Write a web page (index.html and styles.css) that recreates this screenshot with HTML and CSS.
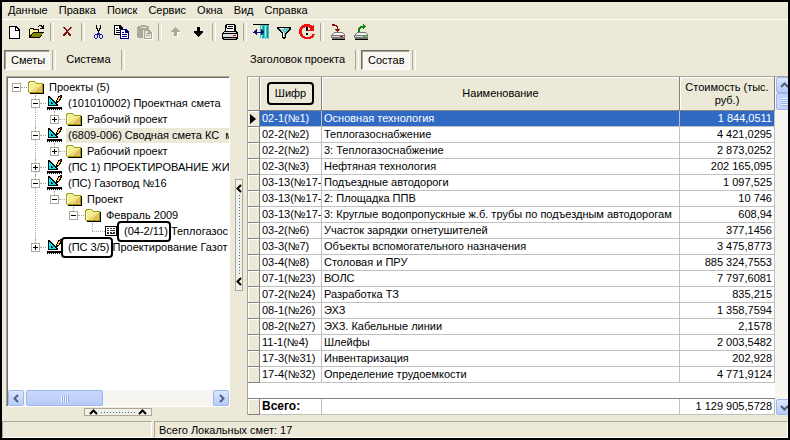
FILE: index.html
```
<!DOCTYPE html>
<html lang="ru">
  <head>
    <meta charset="utf-8" />
    <title>Проекты</title>
    <link rel="stylesheet" href="styles.css">
  </head>
  <body>
    <svg class="defs" width="0" height="0" aria-hidden="true">
      <symbol id="folder" viewBox="0 0 16 16">
        <path d="M2 15h14V5h-1v9H2z" fill="#000" />
        <path d="M0 4l1-2h5l2 2h6l1 1v9H1l-1-1z" fill="#9c9c00" />
        <path d="M1 4l1-1h4l2 2h6v8H1z" fill="#f4ee90" />
        <path d="M1 4h1v8H1zM2 3h4v1H2z" fill="#fffff0" />
        <path d="M6 13l8-7v7z" fill="#e0bd5c" />
        <path d="M3 12l9-6h1l-8 7H3z" fill="#ead578" />
      </symbol>
      <symbol id="project" viewBox="0 0 16 16">
        <path d="M1 1h1l9 9v1H1z" fill="#000" />
        <path d="M2 3l7 7H2z" fill="#00e8f0" />
        <path d="M4 7h1v1h1v1H4z" fill="#000" />
        <path d="M0 12h15v3H0z" fill="#000" />
        <path d="M1 14h1v1H1zM3 14h1v1H3zM5 14h1v1H5zM7 14h1v1H7zM9 14h1v1H9zM11 14h1v1h-1zM13 14h1v1h-1z" fill="#fff" />
        <path d="M8 7h1V5h1V3h1V1h2V0h2v3h-1v2h-1v1h-1v1h-1v1H8z" fill="#000" />
        <path d="M10 5h1V3h1V2h1v2h-1v2h-2z" fill="#ffe600" />
        <path d="M13 1h1v1h-1z" fill="#d00000" />
      </symbol>
      <symbol id="sheet" viewBox="0 0 12 12">
        <path d="M0 1h12v10H0z" fill="#000" />
        <path d="M1 2h10v8H1z" fill="#fff" />
        <path d="M2 3h2v1H2zM5 3h2v1H5zM8 3h2v1H8zM2 5h2v1H2zM5 5h5v1H5zM2 7h2v1H2zM5 7h2v1H5zM8 7h2v1H8zM2 9h2V8H2zM5 9h5V8H5z" fill="#333" />
      </symbol>
      <symbol id="drive" viewBox="0 0 16 16">
        <path d="M4 8h9l2 3v3l-1 1H2l-1-1v-3z" fill="#777" />
        <path d="M4 9h8l2 2H2z" fill="#f4f4f4" />
        <path d="M2 12h12v1H2z" fill="#d8d8d8" />
        <path d="M2 15h12l1-1v1l-1 1H2z" fill="#000" />
      </symbol>
    </svg>

    <div class="app">
      <nav class="menu">
        <button type="button">Данные</button>
        <button type="button">Правка</button>
        <button type="button">Поиск</button>
        <button type="button">Сервис</button>
        <button type="button">Окна</button>
        <button type="button">Вид</button>
        <button type="button">Справка</button>
      </nav>

      <div class="toolbar">
        <button type="button" aria-label="Создать">
          <svg viewBox="0 0 16 16">
            <path d="M3 2h7l4 4v9H3z" fill="#000" />
            <path d="M4 3h5v4h4v7H4z" fill="#fff" />
            <path d="M10 4l2 2h-2z" fill="#fff" />
          </svg>
        </button>
        <button type="button" aria-label="Открыть">
          <svg viewBox="0 0 16 16">
            <path d="M0 5l1-1h3l1 1h5v3h5l-4 6H0z" fill="#000" />
            <path d="M1 5h3v1h5v2H4L1 12z" fill="#fff28c" />
            <path d="M4 9h10l-3 4H2z" fill="#848400" />
            <path d="M9 2h1V1h3v1h1V1h1v4h-4V4h2V3h-1V2h-2v1H9z" fill="#000" />
          </svg>
        </button>
        <span class="sep"></span>
        <button type="button" aria-label="Удалить">
          <svg viewBox="0 0 16 16">
            <path d="M3 3h2l1 2 1 1 2-2 1-1h2v1h-1L8 7l1 2 1 1h1v2H9L8 10 7 9l-2 2v1H3v-2l1-1 2-2-1-1-2-2z" fill="#7c1010" />
          </svg>
        </button>
        <span class="sep"></span>
        <button type="button" aria-label="Вырезать">
          <svg viewBox="0 0 16 16">
            <path d="M5 1h1v3h1v2h1V4h1V1h1v4H9v2H8v2H7V7H6V5H5z" fill="#000" />
            <path d="M7 8h1v1h1v1h2v1h1v3h-1v1H9v-1H8v-3H7v3H6v1H4v-1H3v-3h1v-1h2V9h1zM4 11v3h2v-3zM9 11v3h2v-3z" fill="#1a1a9c" fill-rule="evenodd" />
          </svg>
        </button>
        <button type="button" aria-label="Копировать">
          <svg viewBox="0 0 16 16">
            <path d="M0 1h6l3 3v7H0z" fill="#000" />
            <path d="M1 2h4v3h3v5H1z" fill="#fff" />
            <path d="M2 4h2v1H2zM2 6h4v1H2zM2 8h4v1H2z" fill="#000" />
            <path d="M6 5h6l3 3v7H6z" fill="#00007c" />
            <path d="M7 6h4v3h3v5H7z" fill="#fff" />
            <path d="M8 8h2v1H8zM8 10h5v1H8zM8 12h5v1H8z" fill="#00007c" />
          </svg>
        </button>
        <button type="button" aria-label="Вставить" disabled>
          <svg viewBox="0 0 16 16">
            <path d="M1 2h3V1h5v1h3v4H6v8H1L0 13V3z" fill="#aca899" />
            <path d="M4 3h5v1H4z" fill="#ece9d8" />
            <path d="M7 7h6l3 3v6H7z" fill="#fff" />
            <path d="M7 6h5l3 3v6H7z" fill="#aca899" />
            <path d="M8 7h3v3h3v4H8z" fill="#ece9d8" />
            <path d="M9 9h2v1H9zM9 11h4v1H9z" fill="#aca899" />
          </svg>
        </button>
        <span class="sep"></span>
        <button type="button" aria-label="Вверх" disabled>
          <svg viewBox="0 0 16 16">
            <path d="M8 4h1v1h1v1h1v1h1v1h1v1h-3v4H7V9z" fill="#fff" />
            <path d="M7 3h1v1h1v1h1v1h1v1h1v1H9v4H6V8H3V7h1V6h1V5h1V4h1z" fill="#aca899" />
          </svg>
        </button>
        <button type="button" aria-label="Вниз">
          <svg viewBox="0 0 16 16">
            <path d="M6 3h3v4h3v2h-1v1h-1v1H9v1H8v1H7v-1H6v-1H5v-1H4V9H3V7h3z" fill="#000" />
          </svg>
        </button>
        <span class="sep"></span>
        <button type="button" aria-label="Печать">
          <svg viewBox="0 0 16 16">
            <path d="M4 0h9v1h1v6h1l1 2v5l-1 2H1l-1-2V9l2-2h1V3z" fill="#000" />
            <path d="M5 1h7v6H4z" fill="#fff" />
            <path d="M6 2h5v1H6zM5 4h6v1H5z" fill="#000" />
            <path d="M2 8h12v1H2zM1 10h14v3H1z" fill="#ddd" />
            <path d="M11 11h3v1h-3z" fill="#e00000" />
            <path d="M2 14h12v1H2z" fill="#aaa" />
          </svg>
        </button>
        <span class="sep"></span>
        <button type="button" aria-label="Столбцы">
          <svg viewBox="0 0 16 16">
            <path d="M0 0h16v1H0z" fill="#000" />
            <path d="M7 1h9v13l-1 1-1-1-2 1-1-1-2 1-1-1H7z" fill="#37c4c4" />
            <path d="M8 2h1v12H8zM12 2h1v11h-1z" fill="#a8f4f0" />
            <path d="M10 2h1v12h-1zM14 2h1v12h-1z" fill="#168484" />
            <path d="M0 8h1V7h1V6h1V5h1v3h4V5h1v1h1v1h1v2h-1v1H9v1H8V9H4v2H3v-1H2V9H0z" fill="#10107c" />
          </svg>
        </button>
        <button type="button" aria-label="Фильтр">
          <svg viewBox="0 0 16 16">
            <path d="M1 3h14v2l-5 5v4H9v1H7v-1H6v-4L1 5z" fill="#000" />
            <path d="M3 4h10v1L9 9v4H7V9L3 5z" fill="#63c8c8" />
            <path d="M4 4h4v1H5l3 4v4H7V9z" fill="#fff" />
          </svg>
        </button>
        <button type="button" aria-label="Обновить">
          <svg viewBox="0 0 16 16">
            <path d="M5 0h6v1h2v1h1V1h1v6H9V6h2V4h-1V3H6v1H4v1H3v5h1v2h2v1h5v-1h2v-2h3v1h-1v2h-1v1h-2v1H5v-1H3v-1H2v-1H1v-2H0V5h1V3h1V2h1V1h2z" fill="#f01010" />
            <path d="M7 3h2v4H7zM7 9h2v2H7z" fill="#000" />
          </svg>
        </button>
        <span class="sep"></span>
        <button type="button" aria-label="Загрузить">
          <svg viewBox="0 0 16 16">
            <use href="#drive" />
            <path d="M2 0h3v1h2v1h1v3h2v1H9v1H8v1H7V7H6V6H5V5h2V3H6V2H2z" fill="#8c1010" />
            <path d="M10 12h3v1h-3z" fill="#e00000" />
          </svg>
        </button>
        <button type="button" aria-label="Выгрузить">
          <svg viewBox="0 0 16 16">
            <use href="#drive" />
            <path d="M5 8V4h1V3h1V2h3V0h1v1h1v1h1v1h-1v1h-1v1h-1V4H8v1H7v3z" fill="#108410" />
            <path d="M10 12h3v1h-3z" fill="#10e010" />
          </svg>
        </button>
      </div>

      <main class="work">
        <section class="side">
          <div class="tabs">
            <button type="button" class="tab active">Сметы</button>
            <span class="sep"></span>
            <button type="button" class="tab">Система</button>
            <span class="sep"></span>
          </div>
          <div class="tree">
            <ul class="nodes">
              <li>
                <div class="node"><button type="button" class="toggle open" aria-label="Свернуть"></button><svg class="icon"><use href="#folder" /></svg><span class="label">Проекты (5)</span></div>
                <ul>
                  <li>
                    <div class="node"><button type="button" class="toggle open" aria-label="Свернуть"></button><svg class="icon"><use href="#project" /></svg><span class="label">(101010002) Проектная смета</span></div>
                    <ul>
                      <li><div class="node"><button type="button" class="toggle" aria-label="Развернуть"></button><svg class="icon"><use href="#folder" /></svg><span class="label">Рабочий проект</span></div></li>
                    </ul>
                  </li>
                  <li>
                    <div class="node"><button type="button" class="toggle open" aria-label="Свернуть"></button><svg class="icon"><use href="#project" /></svg><span class="label current">(6809-006) Сводная смета КС&nbsp; м</span></div>
                    <ul>
                      <li><div class="node"><button type="button" class="toggle" aria-label="Развернуть"></button><svg class="icon"><use href="#folder" /></svg><span class="label">Рабочий проект</span></div></li>
                    </ul>
                  </li>
                  <li>
                    <div class="node"><button type="button" class="toggle" aria-label="Развернуть"></button><svg class="icon"><use href="#project" /></svg><span class="label">(ПС 1) ПРОЕКТИРОВАНИЕ ЖИЛ</span></div>
                  </li>
                  <li>
                    <div class="node"><button type="button" class="toggle open" aria-label="Свернуть"></button><svg class="icon"><use href="#project" /></svg><span class="label">(ПС) Газотвод №16</span></div>
                    <ul>
                      <li>
                        <div class="node"><button type="button" class="toggle open" aria-label="Свернуть"></button><svg class="icon"><use href="#folder" /></svg><span class="label">Проект</span></div>
                        <ul>
                          <li>
                            <div class="node"><button type="button" class="toggle open" aria-label="Свернуть"></button><svg class="icon"><use href="#folder" /></svg><span class="label">Февраль 2009</span></div>
                            <ul>
                              <li><div class="node leaf"><svg class="icon small"><use href="#sheet" /></svg><span class="label"><span class="mark">(04-2/11)</span> Теплогазос</span></div></li>
                            </ul>
                          </li>
                        </ul>
                      </li>
                    </ul>
                  </li>
                  <li>
                    <div class="node"><button type="button" class="toggle" aria-label="Развернуть"></button><svg class="icon"><use href="#project" /></svg><span class="label"><span class="mark">(ПС 3/5)</span> Проектирование Газот</span></div>
                  </li>
                </ul>
              </li>
            </ul>
            <div class="hscroll">
              <button type="button" class="arrow" aria-label="Влево"><svg viewBox="0 0 9 9"><path d="M6 1L2.500 4.500 6 8" /></svg></button>
              <span class="thumb"></span>
              <button type="button" class="arrow" aria-label="Вправо"><svg viewBox="0 0 9 9"><path d="M3 1l3.500 3.500L3 8" /></svg></button>
            </div>
          </div>
          <div class="split-h">
            <svg viewBox="0 0 7 4"><path d="M0 4l3.500-3.500L7 4" /></svg>
            <span class="dots"></span>
            <svg viewBox="0 0 7 4"><path d="M0 4l3.500-3.500L7 4" /></svg>
          </div>
        </section>

        <div class="split-v">
          <svg viewBox="0 0 4 7"><path d="M4 0L.5 3.500 4 7" /></svg>
          <span class="dots"></span>
          <svg viewBox="0 0 4 7"><path d="M4 0L.5 3.500 4 7" /></svg>
        </div>

        <section class="content">
          <div class="tabs">
            <button type="button" class="tab">Заголовок проекта</button>
            <span class="sep"></span>
            <button type="button" class="tab active">Состав</button>
            <span class="sep"></span>
          </div>
          <div class="grid">
            <div class="table-box">
            <table>
              <colgroup>
                <col class="c-mark"><col class="c-code"><col><col class="c-cost">
              </colgroup>
              <thead>
                <tr><th></th><th><span class="mark wide">Шифр</span></th><th>Наименование</th><th>Стоимость (тыс. руб.)</th></tr>
              </thead>
              <tbody>
                <tr class="selected"><td><svg class="pointer" viewBox="0 0 6 10"><path d="M0 0l6 5-6 5z" /></svg></td><td>02-1(№1)</td><td>Основная технология</td><td>1 844,0511</td></tr>
                <tr><td></td><td>02-2(№2)</td><td>Теплогазоснабжение</td><td>4 421,0295</td></tr>
                <tr><td></td><td>02-2(№2)</td><td>3: Теплогазоснабжение</td><td>2 873,0252</td></tr>
                <tr><td></td><td>02-3(№3)</td><td>Нефтяная технология</td><td>202 165,095</td></tr>
                <tr><td></td><td>03-13(№17-1)</td><td>Подъездные автодороги</td><td>1 097,525</td></tr>
                <tr><td></td><td>03-13(№17-2)</td><td>2: Площадка ППВ</td><td>10 746</td></tr>
                <tr><td></td><td>03-13(№17-3)</td><td>3: Круглые водопропускные ж.б. трубы по подъездным автодорогам</td><td>608,94</td></tr>
                <tr><td></td><td>03-2(№6)</td><td>Участок зарядки огнетушителей</td><td>377,1456</td></tr>
                <tr><td></td><td>03-3(№7)</td><td>Объекты вспомогательного назначения</td><td>3 475,8773</td></tr>
                <tr><td></td><td>03-4(№8)</td><td>Столовая и ПРУ</td><td>885 324,7553</td></tr>
                <tr><td></td><td>07-1(№23)</td><td>ВОЛС</td><td>7 797,6081</td></tr>
                <tr><td></td><td>07-2(№24)</td><td>Разработка ТЗ</td><td>835,215</td></tr>
                <tr><td></td><td>08-1(№26)</td><td>ЭХЗ</td><td>1 358,7594</td></tr>
                <tr><td></td><td>08-2(№27)</td><td>ЭХЗ. Кабельные линии</td><td>2,1578</td></tr>
                <tr><td></td><td>11-1(№4)</td><td>Шлейфы</td><td>2 003,5482</td></tr>
                <tr><td></td><td>17-3(№31)</td><td>Инвентаризация</td><td>202,928</td></tr>
                <tr><td></td><td>17-4(№32)</td><td>Определение трудоемкости</td><td>4 771,9124</td></tr>
              </tbody>
              <tfoot>
                <tr class="gap"><td colspan="4"></td></tr>
                <tr><td></td><td>Всего:</td><td></td><td>1 129 905,5728</td></tr>
              </tfoot>
            </table>
            </div>
            <div class="vscroll">
              <button type="button" class="arrow" aria-label="Вверх"><svg viewBox="0 0 9 9"><path d="M1 6l3.500-3.500L8 6" /></svg></button>
              <span class="thumb"></span>
              <button type="button" class="arrow" aria-label="Вниз"><svg viewBox="0 0 9 9"><path d="M1 3l3.500 3.500L8 3" /></svg></button>
            </div>
          </div>
        </section>
      </main>

      <footer class="status">
        <span class="cell first"></span>
        <span class="cell">Всего Локальных смет: 17</span>
      </footer>
    </div>
  </body>
</html>
```
FILE: styles.css
```
* {
  box-sizing: border-box;
}

body {
  margin: 0;
  background: #000;
  color: #000;
  font-family: "Liberation Sans", Arial, sans-serif;
  font-size: 11px;
  line-height: 15px;
}

button {
  padding: 0;
  border: 0;
  background: none;
  color: inherit;
  font: inherit;
}

ul {
  margin: 0;
  padding: 0;
  list-style: none;
}

.defs {
  position: absolute;
}

.app {
  display: flex;
  flex-direction: column;
  height: 100vh;
  border: 2px solid #000;
  background: #ece9d8;
  overflow: hidden;
}

/* menu and toolbar */

.menu {
  display: flex;
  height: 18px;
  border-bottom: 1px solid #fff;
}

.menu button {
  padding: 0 5px 0 6px;
}

.toolbar {
  display: flex;
  align-items: center;
  height: 23px;
}

.toolbar button {
  display: flex;
  align-items: center;
  justify-content: center;
  width: 23px;
  height: 22px;
}

.toolbar svg {
  width: 16px;
  height: 16px;
  shape-rendering: crispEdges;
}

.sep {
  display: flex;
  width: 8px;
  height: 18px;
  justify-content: center;
}

.sep::before {
  content: "";
  width: 2px;
  border-left: 1px solid #aca899;
  border-right: 1px solid #fff;
}

/* main area */

.work {
  display: flex;
  flex: 1;
  min-height: 0;
}

.side {
  display: flex;
  flex-direction: column;
  width: 228px;
  padding-left: 4px;
}

.content {
  display: flex;
  flex: 1;
  flex-direction: column;
  min-width: 0;
}

.tabs {
  display: flex;
  align-items: center;
  height: 33px;
}

.side .tabs {
  margin-left: -2px;
}

.tab {
  height: 20px;
  padding: 0 8px;
  white-space: nowrap;
}

.content .tab:first-child {
  padding-left: 3px;
}

.tabs .sep {
  height: 20px;
}

.tab.active {
  padding: 1px 4px 0 6px;
  border: 1px solid;
  border-color: #716f64 #fff #fff #716f64;
  background: repeating-conic-gradient(#fff 0 25%, #f0eee2 0 50%) 0 0 / 2px 2px;
  box-shadow: inset 1px 1px #aca899;
}

/* project tree */

.tree {
  display: flex;
  flex: 1;
  flex-direction: column;
  min-height: 0;
  border: 1px solid;
  border-color: #aca899 #fff #fff #aca899;
  box-shadow: inset 1px 1px #716f64;
  background: #fff;
}

.nodes {
  flex: 1;
  min-height: 0;
  padding: 2px 0 0 5px;
  overflow: hidden;
}

.nodes li {
  position: relative;
}

.nodes ul {
  padding-left: 19px;
}

.nodes ul > li::before {
  content: "";
  position: absolute;
  top: 0;
  bottom: 0;
  left: 4px;
  border-left: 1px dotted #aca899;
}

.nodes ul > li:last-child::before {
  bottom: auto;
  height: 8px;
}

.node {
  display: flex;
  align-items: center;
  height: 16px;
  white-space: nowrap;
}

.node.leaf {
  padding-left: 4px;
}

.node.leaf::before {
  content: "";
  flex: none;
  width: 13px;
  border-top: 1px dotted #aca899;
}

.toggle {
  position: relative;
  flex: none;
  width: 9px;
  height: 9px;
  margin-right: 7px;
  border: 1px solid #aca899;
  background:
    linear-gradient(#000, #000) center / 5px 1px no-repeat,
    linear-gradient(#000, #000) center / 1px 5px no-repeat,
    #fff;
}

.toggle.open {
  background: linear-gradient(#000, #000) center / 5px 1px no-repeat, #fff;
}

.toggle::after {
  content: "";
  position: absolute;
  top: 3px;
  left: 8px;
  width: 6px;
  border-top: 1px dotted #aca899;
}

.icon {
  position: relative;
  flex: none;
  width: 16px;
  height: 16px;
  shape-rendering: crispEdges;
}

.icon.small {
  width: 12px;
  height: 12px;
}

.label {
  flex: 1;
  margin-left: 3px;
  padding-left: 2px;
}

.leaf .label {
  margin-left: 5px;
}

.label.current {
  background: #ece9d8;
}

/* framed codes */

.mark {
  position: relative;
  z-index: 1;
  display: inline-block;
}

.mark::before {
  content: "";
  position: absolute;
  z-index: -1;
  inset: -3px -3px -3px -7px;
  border: 2px solid #000;
  border-radius: 4px;
  background: #fff;
}

.mark.wide::before {
  inset: -5px -8px;
  background: none;
}

/* scroll bars */

.hscroll,
.vscroll {
  display: flex;
  background: #f6f5ef;
}

.hscroll {
  height: 16px;
  margin-left: 1px;
}

.vscroll {
  flex: none;
  flex-direction: column;
  width: 13px;
  padding-left: 1px;
  overflow: hidden;
}

.arrow {
  display: flex;
  flex: none;
  align-items: center;
  justify-content: center;
  width: 16px;
  height: 16px;
  border: 1px solid #9cb6ee;
  border-radius: 2px;
  background: linear-gradient(#dce6fe, #b8cbf8);
}

.arrow svg {
  width: 9px;
  height: 9px;
  fill: none;
  stroke: #4d6185;
  stroke-width: 2;
}

.arrow:last-child {
  margin-left: auto;
}

.vscroll .arrow:last-child {
  margin-top: auto;
  margin-left: 0;
}

.thumb {
  border: 1px solid #9cb6ee;
  border-radius: 2px;
}

.hscroll .thumb {
  width: 35%;
  margin-left: 2px;
  background:
    repeating-linear-gradient(90deg, #eef4fe 0 1px, #8cb0f8 1px 2px) center / 8px 7px no-repeat,
    linear-gradient(#cad8fc, #b8cbf8);
}

.vscroll .thumb {
  flex: none;
  width: 16px;
  height: 17px;
  background:
    repeating-linear-gradient(#eef4fe 0 1px, #8cb0f8 1px 2px) center / 7px 8px no-repeat,
    linear-gradient(90deg, #cad8fc, #b8cbf8);
}

/* splitters */

.split-h,
.split-v {
  display: flex;
  align-items: center;
  justify-content: space-between;
  border: 1px solid #aca899;
  background: #f3f1e7;
}

.split-h {
  align-self: center;
  width: 68px;
  height: 8px;
  margin: 1px 0 5px;
  padding: 0 5px;
}

.split-v {
  flex-direction: column;
  align-self: center;
  width: 8px;
  height: 112px;
  margin: 6px 4px 0 5px;
  padding: 5px 0;
}

.split-h svg {
  width: 7px;
  height: 4px;
}

.split-v svg {
  width: 4px;
  height: 7px;
}

.split-h svg,
.split-v svg {
  overflow: visible;
  fill: none;
  stroke: #000;
  stroke-width: 2;
}

.split-h .dots {
  width: 35px;
  height: 1px;
  background: repeating-linear-gradient(90deg, #316ac5 0 1px, transparent 1px 3px);
}

.split-v .dots {
  width: 1px;
  height: 80px;
  background: repeating-linear-gradient(#316ac5 0 1px, transparent 1px 3px);
}

/* estimate grid */

.grid {
  display: flex;
  flex: 1;
  margin-bottom: 6px;
  border: solid #aca899;
  border-width: 1px 0 0 1px;
  background: #fff;
}

.table-box {
  flex: 1;
  min-width: 0;
}

table {
  width: 100%;
  border-spacing: 0;
  table-layout: fixed;
}

.c-mark {
  width: 12px;
}

.c-code {
  width: 62px;
}

.c-cost {
  width: 95px;
}

th {
  height: 34px;
  padding: 0 4px;
  border: solid #848284;
  border-width: 0 1px 1px 0;
  background: #ece9d8;
  box-shadow: inset 1px 1px #fff;
  font-weight: normal;
  line-height: 13px;
}

th:first-child {
  padding: 0;
}

td {
  height: 16px;
  padding: 0 2px;
  border: solid #c0c0c0;
  border-width: 0 1px 1px 0;
  overflow: hidden;
  white-space: nowrap;
}

td:first-child:not([colspan]) {
  padding: 0 2px;
  border-color: #848284;
  background: #ece9d8;
  box-shadow: inset 1px 1px #fff;
}

td:last-child {
  text-align: right;
}

.selected td:not(:first-child) {
  background: #316ac5;
  color: #fff;
}

.pointer {
  display: block;
  width: 6px;
  height: 10px;
}

.gap td {
  border-color: #848284;
  border-right: 0;
}

tfoot td:nth-child(2) {
  font-size: 12px;
  font-weight: bold;
}

/* status bar */

.status {
  display: flex;
  gap: 2px;
  height: 17px;
}

.cell {
  flex: 1;
  padding-left: 4px;
  border: 1px solid;
  border-color: #aca899 #fff #fff #aca899;
  line-height: 17px;
}

.cell.first {
  flex: none;
  width: 150px;
}
```
